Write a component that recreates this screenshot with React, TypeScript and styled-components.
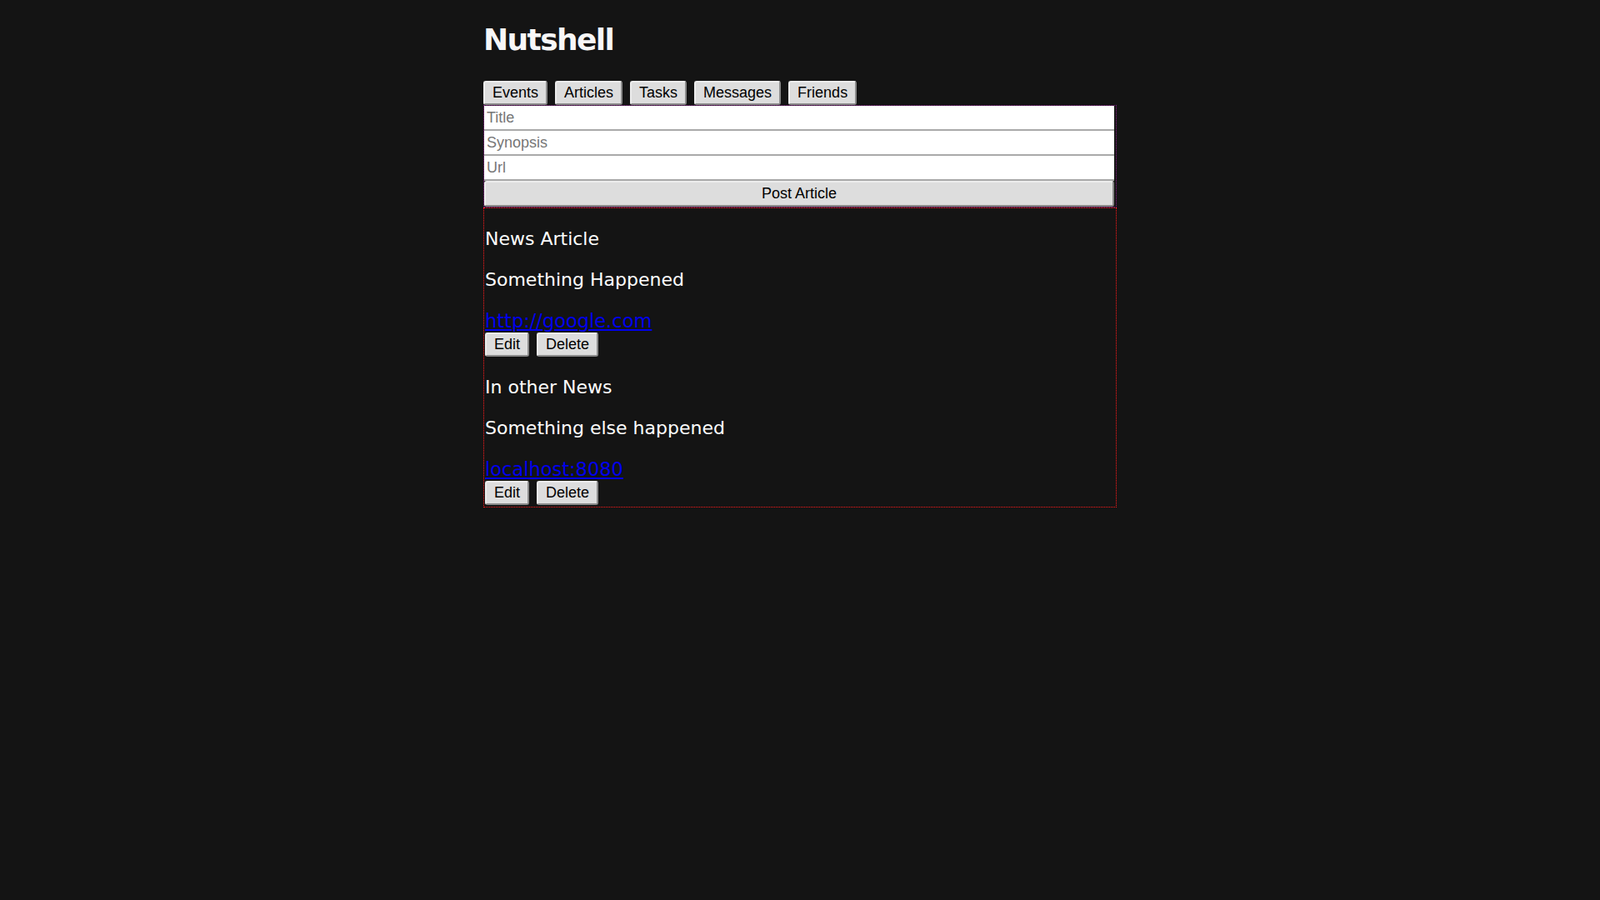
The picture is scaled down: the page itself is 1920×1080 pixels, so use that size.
import React from "react";
import styled, { createGlobalStyle } from "styled-components";

const GlobalStyle = createGlobalStyle`
  html, body {
    margin: 0;
    padding: 0;
    background: #141414;
  }
  body {
    font-family: "DejaVu Sans", Verdana, sans-serif;
    color: #ffffff;
  }
  * { box-sizing: border-box; }
`;

const Page = styled.div`
  width: 760px;
  margin: 0 auto;
  padding-top: 28px;
`;

const Title = styled.h1`
  margin: 0;
  font-family: "DejaVu Sans", Verdana, sans-serif;
  font-weight: bold;
  font-size: 36px;
  line-height: 40px;
  letter-spacing: -1.6px;
  color: #f7f7f7;
`;

const Nav = styled.nav`
  display: flex;
  gap: 9px;
  margin-top: 29px;
`;

const Button = styled.button<{ $block?: boolean }>`
  display: ${(p) => (p.$block ? "block" : "inline-block")};
  width: ${(p) => (p.$block ? "100%" : "auto")};
  margin: 0;
  padding: ${(p) => (p.$block ? "3px 9px" : "2px 9px")};
  font-family: "Liberation Sans", Arial, sans-serif;
  font-size: 18px;
  line-height: 21px;
  color: #000;
  background: #dddddd;
  border: 2px solid;
  border-color: #ececec #8a8a8a #8a8a8a #ececec;
  border-radius: 3px;
  cursor: pointer;
  text-align: center;
`;

const Form = styled.form`
  margin-top: 0;
  border: 1px dotted #8a1f8a;
  padding: 0 2px 0 0;
`;

const Field = styled.input`
  display: block;
  width: 100%;
  height: 30px;
  margin: 0;
  padding: 0 3px;
  border: none;
  border-bottom: 2px solid #a9a9a9;
  background: #ffffff;
  font-family: "Liberation Sans", Arial, sans-serif;
  font-size: 18px;
  color: #000;
  outline: none;
  &::placeholder {
    color: #767676;
  }
`;

const ArticleList = styled.section`
  border: 1px dotted #ff1a1a;
  padding: 0 0 2px 1px;
`;

const Article = styled.article`
  display: flex;
  flex-direction: column;
`;

const Line = styled.p<{ $first?: boolean; $size?: number }>`
  margin: ${(p) => (p.$first ? "24px" : "23px")} 0 0 0;
  font-size: ${(p) => p.$size ?? 22}px;
  line-height: 26px;
  color: #ffffff;
`;

const Link = styled.a`
  color: #0000ee;
  text-decoration: underline;
`;

const Actions = styled.div`
  display: flex;
  gap: 9px;
  margin-top: 1px;
`;

const tabs = ["Events", "Articles", "Tasks", "Messages", "Friends"];

const articles = [
  { title: "News Article", synopsis: "Something Happened", url: "http://google.com" },
  { title: "In other News", synopsis: "Something else happened", url: "localhost:8080" },
];

export default function App() {
  return (
    <>
      <GlobalStyle />
      <Page>
        <Title>Nutshell</Title>
        <Nav>
          {tabs.map((t) => (
            <Button key={t} type="button">
              {t}
            </Button>
          ))}
        </Nav>
        <Form onSubmit={(e) => e.preventDefault()}>
          <Field placeholder="Title" />
          <Field placeholder="Synopsis" />
          <Field placeholder="Url" />
          <Button $block type="submit">
            Post Article
          </Button>
        </Form>
        <ArticleList>
          {articles.map((a) => (
            <Article key={a.title}>
              <Line $first>{a.title}</Line>
              <Line>{a.synopsis}</Line>
              <Line $size={22.5}>
                <Link href={a.url}>{a.url}</Link>
              </Line>
              <Actions>
                <Button type="button">Edit</Button>
                <Button type="button">Delete</Button>
              </Actions>
            </Article>
          ))}
        </ArticleList>
      </Page>
    </>
  );
}
